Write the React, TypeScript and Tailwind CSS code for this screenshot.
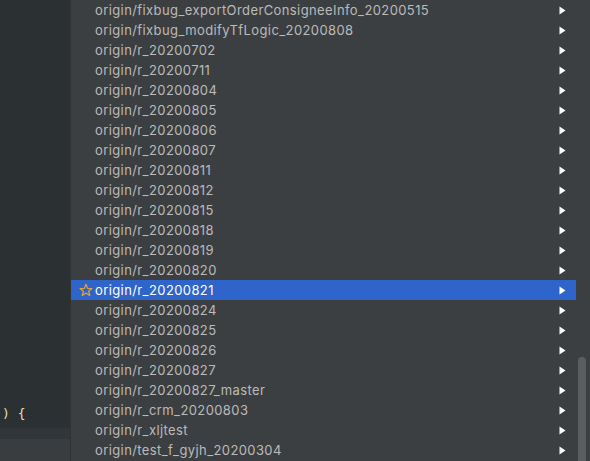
import React from 'react';

const branches = [
  'origin/fixbug_exportOrderConsigneeInfo_20200515',
  'origin/fixbug_modifyTfLogic_20200808',
  'origin/r_20200702',
  'origin/r_20200711',
  'origin/r_20200804',
  'origin/r_20200805',
  'origin/r_20200806',
  'origin/r_20200807',
  'origin/r_20200811',
  'origin/r_20200812',
  'origin/r_20200815',
  'origin/r_20200818',
  'origin/r_20200819',
  'origin/r_20200820',
  'origin/r_20200821',
  'origin/r_20200824',
  'origin/r_20200825',
  'origin/r_20200826',
  'origin/r_20200827',
  'origin/r_20200827_master',
  'origin/r_crm_20200803',
  'origin/r_xljtest',
  'origin/test_f_gyjh_20200304',
];

const SELECTED = 'origin/r_20200821';

const Star = () => (
  <svg width="14" height="14" viewBox="0 0 13 13" fill="none">
    <path
      d="M6.5 1.2 L8 5 L12 5.1 L8.9 7.6 L10 11.6 L6.5 9.3 L3 11.6 L4.1 7.6 L1 5.1 L5 5 Z"
      stroke="#e5a53a"
      strokeWidth="1.1"
      strokeLinejoin="round"
    />
  </svg>
);

const Arrow = () => (
  <svg width="7" height="9" viewBox="0 0 7 9">
    <path d="M0.5 0.5 L6.5 4.5 L0.5 8.5 Z" fill="#ffffff" />
  </svg>
);

const BranchRow = ({ name }: { name: string }) => {
  const selected = name === SELECTED;
  return (
    <div
      className={
        selected
          ? 'flex h-5 items-center pl-2 pr-[10px] bg-[#2f65ca] text-white'
          : 'flex h-5 items-center pl-2 pr-[10px] text-[#bbbbbb]'
      }
    >
      <div className="flex w-4 shrink-0 items-center">{selected && <Star />}</div>
      <span className="flex-1 truncate text-[13px] leading-5 tracking-[0.4px]">{name}</span>
      <Arrow />
    </div>
  );
};

export default function App() {
  return (
    <div
      className="flex h-[461px] w-[590px] overflow-hidden bg-[#3c3f41]"
      style={{ fontFamily: 'Inter, "Liberation Sans", Arial, sans-serif' }}
    >
      {/* editor peeking out on the left */}
      <div className="flex w-[71px] shrink-0 flex-col border-r border-[#323232]">
        <div className="flex h-[428px] flex-col justify-end bg-[#2b3033] pb-[6px]">
          <div
            className="pl-[2px] text-[13px] leading-4 text-[#e6dfb4] whitespace-pre"
            style={{ fontFamily: '"DejaVu Sans Mono", monospace' }}
          >
            {') {'}
          </div>
        </div>
        <div className="h-[11px] bg-[#31363a]" />
        <div className="flex-1 bg-[#3a3d40]" />
      </div>

      {/* branch popup */}
      <div className="flex flex-1 bg-[#3c3f41]">
        <div className="flex-1">
          {branches.map((b) => (
            <BranchRow key={b} name={b} />
          ))}
        </div>
        <div className="flex w-[14px] shrink-0 flex-col justify-end pl-[2px]">
          <div className="h-[104px] w-[8px] rounded-t-full bg-[#5b5e60]" />
        </div>
      </div>
    </div>
  );
}
